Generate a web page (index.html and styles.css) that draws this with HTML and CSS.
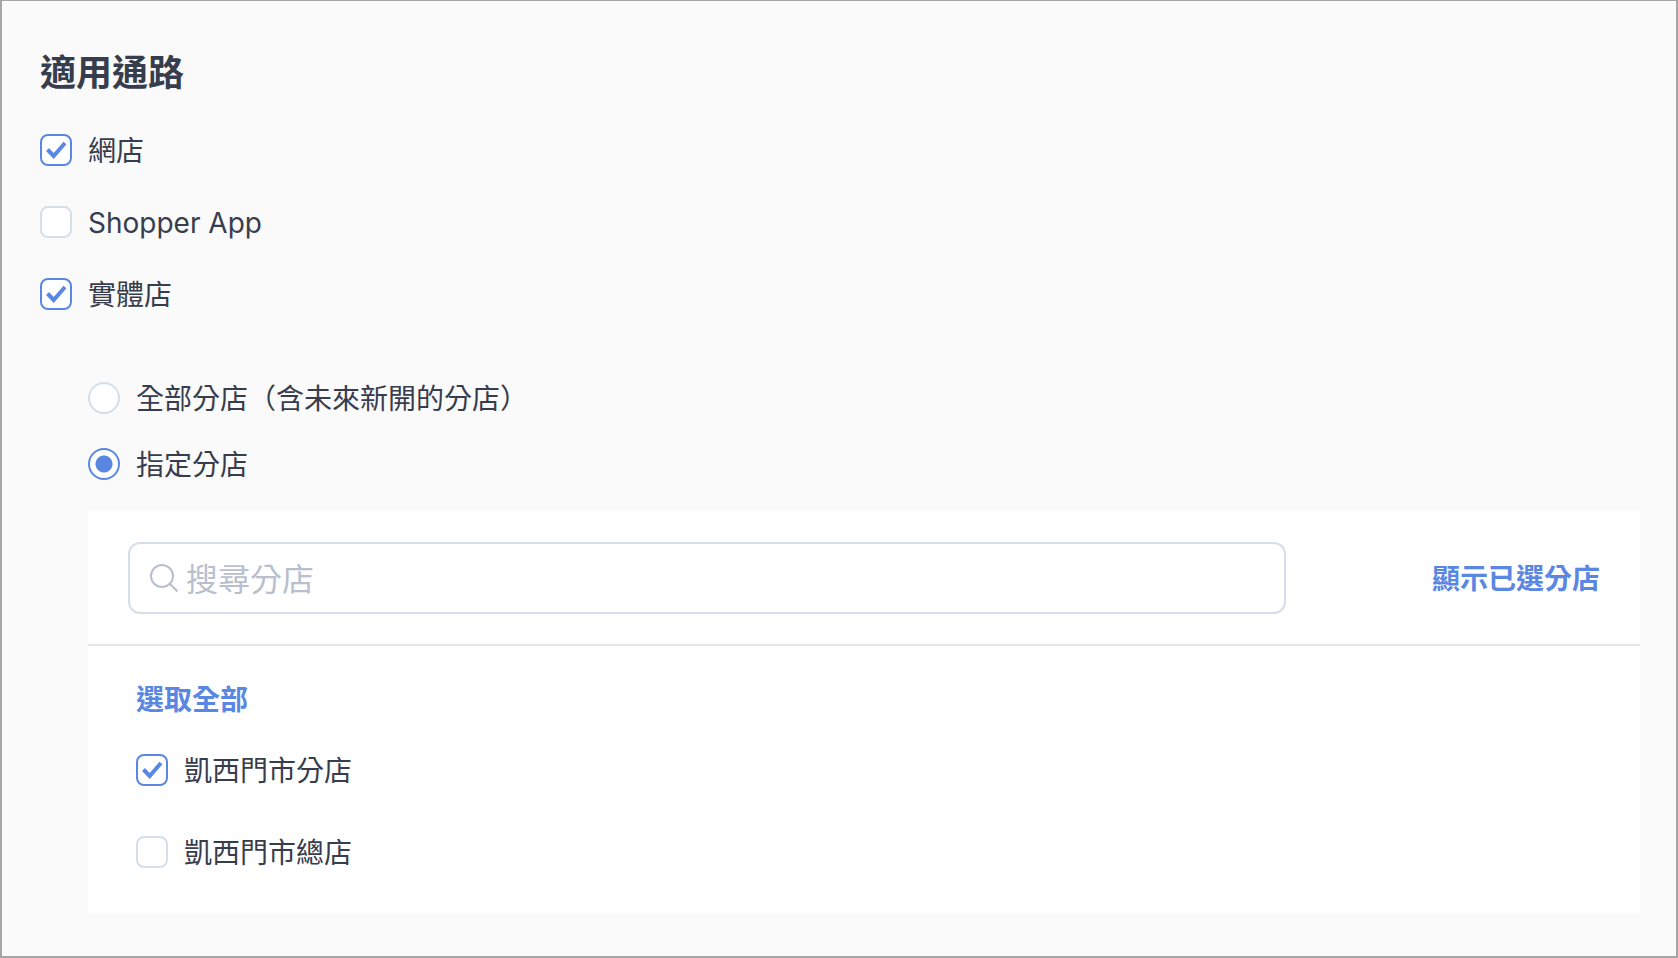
FILE: index.html
```
<!DOCTYPE html>
<html lang="zh-Hant">
<head>
  <meta charset="UTF-8">
  <meta name="viewport" content="width=device-width, initial-scale=1.0">
  <title>適用通路</title>
  <link rel="stylesheet" href="styles.css">
</head>
<body>
  <main class="page">
    <h1 class="title">適用通路</h1>

    <div class="channels">
      <label class="option">
        <span class="control">
          <input type="checkbox" class="box" checked>
          <svg class="tick" viewBox="0 0 32 32"><path d="M7.500 15.500l6.200 6.500L25 9"/></svg>
        </span>
        <span class="option-text">網店</span>
      </label>
      <label class="option">
        <span class="control">
          <input type="checkbox" class="box">
          <svg class="tick" viewBox="0 0 32 32"><path d="M7.500 15.500l6.200 6.500L25 9"/></svg>
        </span>
        <span class="option-text">Shopper App</span>
      </label>
      <label class="option">
        <span class="control">
          <input type="checkbox" class="box" checked>
          <svg class="tick" viewBox="0 0 32 32"><path d="M7.500 15.500l6.200 6.500L25 9"/></svg>
        </span>
        <span class="option-text">實體店</span>
      </label>
    </div>

    <div class="stores">
      <div class="scope">
        <label class="option">
          <input type="radio" name="scope" class="radio">
          <span class="option-text">全部分店（含未來新開的分店）</span>
        </label>
        <label class="option">
          <input type="radio" name="scope" class="radio" checked>
          <span class="option-text">指定分店</span>
        </label>
      </div>

      <section class="panel">
        <div class="panel-header">
          <label class="search">
            <svg class="search-icon" viewBox="0 0 28 28"><circle cx="12" cy="12" r="11"/><path d="M19.500 19.500L27.500 27.500"/></svg>
            <input type="search" class="search-input" placeholder="搜尋分店" aria-label="搜尋分店">
          </label>
          <button type="button" class="link-btn">顯示已選分店</button>
        </div>
        <div class="panel-body">
          <button type="button" class="link-btn">選取全部</button>
          <div class="store-list">
            <label class="option">
              <span class="control">
                <input type="checkbox" class="box" checked>
                <svg class="tick" viewBox="0 0 32 32"><path d="M7.500 15.500l6.200 6.500L25 9"/></svg>
              </span>
              <span class="option-text">凱西門市分店</span>
            </label>
            <label class="option">
              <span class="control">
                <input type="checkbox" class="box">
                <svg class="tick" viewBox="0 0 32 32"><path d="M7.500 15.500l6.200 6.500L25 9"/></svg>
              </span>
              <span class="option-text">凱西門市總店</span>
            </label>
          </div>
        </div>
      </section>
    </div>
  </main>
</body>
</html>
```
FILE: styles.css
```
* {
  box-sizing: border-box;
}
body {
  margin: 0;
  background: #fafafa;
  color: #373d4d;
  font-family: Inter, "Noto Sans CJK TC", sans-serif;
  font-size: 28px;
  line-height: 32px;
}
input, button {
  font-family: inherit;
  margin: 0;
}
.page {
  min-height: 100vh;
  padding: 48px 36px 42px 38px;
  border: 2px solid #a6a6a6;
  border-top-width: 1px;
}
.title {
  margin: 0 0 37px;
  font-size: 36px;
  line-height: 48px;
  font-weight: 700;
}
.channels {
  display: flex;
  flex-direction: column;
  align-items: flex-start;
  gap: 40px;
}
.option {
  display: flex;
  align-items: center;
  gap: 16px;
  height: 32px;
  cursor: pointer;
}
.option-text {
  padding-top: 2px;
}
.control {
  position: relative;
  display: flex;
}
.box, .radio {
  appearance: none;
  flex: none;
  width: 32px;
  height: 32px;
  background: #fff;
  border: 2px solid #d5dfe8;
}
.box {
  border-radius: 8px;
}
.radio {
  border-radius: 50%;
}
.box:checked, .radio:checked {
  border-color: #5a87e2;
}
.radio:checked {
  background: radial-gradient(circle, #5a87e2 8px, #fff 9px);
}
.tick {
  position: absolute;
  inset: 0;
  display: none;
  fill: none;
  stroke: #5a87e2;
  stroke-width: 4;
  pointer-events: none;
}
.box:checked + .tick {
  display: block;
}
.stores {
  margin: 72px 0 0 48px;
}
.scope {
  display: flex;
  flex-direction: column;
  align-items: flex-start;
  gap: 34px;
}
.panel {
  margin-top: 30px;
  background: #fff;
}
.panel-header {
  display: flex;
  align-items: center;
  gap: 146px;
  padding: 32px 40px 30px;
  border-bottom: 2px solid #e5e5e5;
}
.search {
  flex: 1;
  display: flex;
  align-items: center;
  gap: 8px;
  height: 72px;
  padding: 0 20px;
  background: #fff;
  border: 2px solid #d5dfe8;
  border-radius: 12px;
}
.search-icon {
  flex: none;
  width: 28px;
  height: 28px;
  fill: none;
  stroke: #b8bfce;
  stroke-width: 2;
}
.search-input {
  flex: 1;
  min-width: 0;
  padding: 4px 0 0;
  border: none;
  outline: none;
  background: none;
  color: inherit;
  font-size: 32px;
  line-height: 48px;
}
.search-input::placeholder {
  color: #b8bfce;
}
.link-btn {
  padding: 2px 0 0;
  border: none;
  background: none;
  color: #5a87e2;
  font-size: 28px;
  line-height: 32px;
  font-weight: 700;
  cursor: pointer;
}
.panel-body {
  display: flex;
  flex-direction: column;
  align-items: flex-start;
  gap: 38px;
  padding: 36px 48px 46px;
}
.store-list {
  display: flex;
  flex-direction: column;
  gap: 50px;
}
```
